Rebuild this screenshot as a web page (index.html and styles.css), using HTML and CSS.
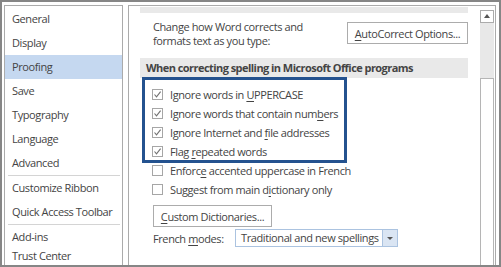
FILE: index.html
```html
<!DOCTYPE html>
<html lang="en">
<head>
  <meta charset="UTF-8">
  <title>Word Options - Proofing</title>
  <link rel="stylesheet" href="styles.css">
</head>
<body>
  <div class="frame">
    <ul class="nav">
      <li class="nav-item">General</li>
      <li class="nav-item">Display</li>
      <li class="nav-item active">Proofing</li>
      <li class="nav-item">Save</li>
      <li class="nav-item">Typography</li>
      <li class="nav-item">Language</li>
      <li class="nav-item">Advanced</li>
      <li class="nav-sep"></li>
      <li class="nav-item">Customize Ribbon</li>
      <li class="nav-item">Quick Access Toolbar</li>
      <li class="nav-sep"></li>
      <li class="nav-item">Add-ins</li>
      <li class="nav-item short">Trust Center</li>
    </ul>

    <div class="panel">
      <div class="scroll-area">
        <div class="band"></div>

        <div class="autocorrect-row">
          <p class="autocorrect-text">Change how Word corrects and<br>formats text as you type:</p>
          <button class="btn btn-autocorrect"><u>A</u>utoCorrect Options...</button>
        </div>

        <div class="section-head">When correcting spelling in Microsoft Office programs</div>

        <div class="options">
          <label class="option"><span class="check on"></span><span>Ignore words in <u>U</u>PPERCASE</span></label>
          <label class="option"><span class="check on"></span><span>Ignore words that contain num<u>b</u>ers</span></label>
          <label class="option"><span class="check on"></span><span>Ignore Internet and <u>f</u>ile addresses</span></label>
          <label class="option"><span class="check on"></span><span>Flag <u>r</u>epeated words</span></label>
          <label class="option"><span class="check"></span><span>Enforc<u>e</u> accented uppercase in French</span></label>
          <label class="option"><span class="check"></span><span>Suggest from main d<u>i</u>ctionary only</span></label>
          <div class="highlight"></div>
        </div>

        <button class="btn btn-dict"><u>C</u>ustom Dictionaries...</button>

        <div class="french-row">
          <span class="french-label">French <u>m</u>odes:</span>
          <div class="select">
            <span class="select-value">Traditional and new spellings</span>
            <span class="select-arrow"></span>
          </div>
        </div>
      </div>

      <div class="scrollbar">
        <div class="scroll-up"></div>
        <div class="scroll-track"></div>
        <div class="scroll-thumb"></div>
      </div>
    </div>
  </div>
</body>
</html>
```

FILE: styles.css
```css
:root {
  --text: #444;
  --line: #ababab;
  --band: #e9e9e9;
  --accent: #24528f;
}

* {
  box-sizing: border-box;
}

body {
  margin: 0;
  font-family: 'Open Sans', 'Noto Sans', sans-serif;
  font-size: 11px;
  letter-spacing: -0.4px;
  color: var(--text);
}

u {
  text-decoration-thickness: 1px;
  text-underline-offset: 2px;
}

.frame {
  width: 501px;
  height: 267px;
  border: 2px solid #868686;
  padding: 3px 3px 0 2px;
  display: flex;
  gap: 5px;
  overflow: hidden;
  background: #fff;
}

/* left navigation list */
.nav {
  list-style: none;
  margin: 0;
  padding: 1px 0 0 0;
  width: 119px;
  flex-shrink: 0;
  border: 1px solid var(--line);
  border-bottom: 0;
}

.nav-item {
  height: 24px;
  line-height: 24px;
  padding-left: 7px;
  white-space: nowrap;
}

.nav-item.active {
  background-color: #c5d8f0;
}

.nav-item.short {
  height: 16px;
  line-height: 14px;
}

.nav-sep {
  height: 1px;
  margin: 0 2px 0 3px;
  background-color: #d4d4d4;
}

/* right content panel */
.panel {
  flex: 1;
  display: flex;
  border: 1px solid var(--line);
  border-bottom: 0;
}

.scroll-area {
  flex: 1;
  padding: 1px 12px 0 11px;
  display: flex;
  flex-direction: column;
}

.band {
  height: 6px;
  background-color: var(--band);
}

.autocorrect-row {
  display: flex;
  justify-content: space-between;
  align-items: flex-start;
  padding: 7px 0 0 13px;
  height: 45px;
}

.autocorrect-text {
  margin: 0;
  line-height: 14px;
}

.btn {
  font-family: inherit;
  font-size: 11px;
  letter-spacing: -0.4px;
  color: var(--text);
  background-color: #fff;
  border: 1px solid #acacac;
  padding: 0;
}

.btn-autocorrect {
  width: 121px;
  height: 22px;
  margin-top: 2px;
}

.section-head {
  height: 20px;
  line-height: 20px;
  padding-left: 6px;
  font-weight: 700;
  letter-spacing: -0.55px;
  background-color: var(--band);
  white-space: nowrap;
}

.options {
  position: relative;
  padding: 7px 0 0 12px;
}

.option {
  display: flex;
  align-items: center;
  gap: 7px;
  height: 19px;
  white-space: nowrap;
}

.check {
  width: 11px;
  height: 11px;
  border: 1px solid #a6a6a6;
  background-color: #fff;
  flex-shrink: 0;
}

.check.on {
  background: #fff url("data:image/svg+xml;utf8,<svg xmlns='http://www.w3.org/2000/svg' width='9' height='9'><polyline points='1.5,4.5 3.5,6.8 7.6,1.6' fill='none' stroke='%23727272' stroke-width='1.1'/></svg>") center / 9px 9px no-repeat;
}

/* annotation box drawn over the first four options */
.highlight {
  position: absolute;
  left: 2px;
  top: -1px;
  width: 205px;
  height: 86px;
  border: 3px solid var(--accent);
}

.btn-dict {
  align-self: flex-start;
  margin: 6px 0 0 13px;
  width: 119px;
  height: 22px;
}

.french-row {
  display: flex;
  align-items: center;
  margin: 2px 0 0 13px;
  height: 18px;
}

.french-label {
  width: 82px;
}

.select {
  display: flex;
  width: 163px;
  height: 18px;
  border: 1px solid #abc3e0;
}

.select-value {
  flex: 1;
  line-height: 16px;
  padding-left: 5px;
  white-space: nowrap;
}

.select-arrow {
  width: 15px;
  background-color: #dae5f3;
  border-left: 1px solid #abc3e0;
  position: relative;
}

.select-arrow::after {
  content: "";
  position: absolute;
  left: 4px;
  top: 7px;
  border-left: 3px solid transparent;
  border-right: 3px solid transparent;
  border-top: 3px solid #555;
}

/* vertical scrollbar */
.scrollbar {
  width: 14px;
  margin-right: 1px;
  padding-top: 4px;
  display: flex;
  flex-direction: column;
}

.scroll-up {
  height: 13px;
  border: 1px solid #ababab;
  background-color: #fff;
  position: relative;
}

.scroll-up::after {
  content: "";
  position: absolute;
  left: 3px;
  top: 3px;
  border-left: 3px solid transparent;
  border-right: 3px solid transparent;
  border-bottom: 4px solid #555;
}

.scroll-track {
  height: 55px;
  background-color: #e8e8e8;
}

.scroll-thumb {
  flex: 1;
  border: 1px solid #b5b5b5;
  border-bottom: 0;
  background-color: #fff;
}
```
